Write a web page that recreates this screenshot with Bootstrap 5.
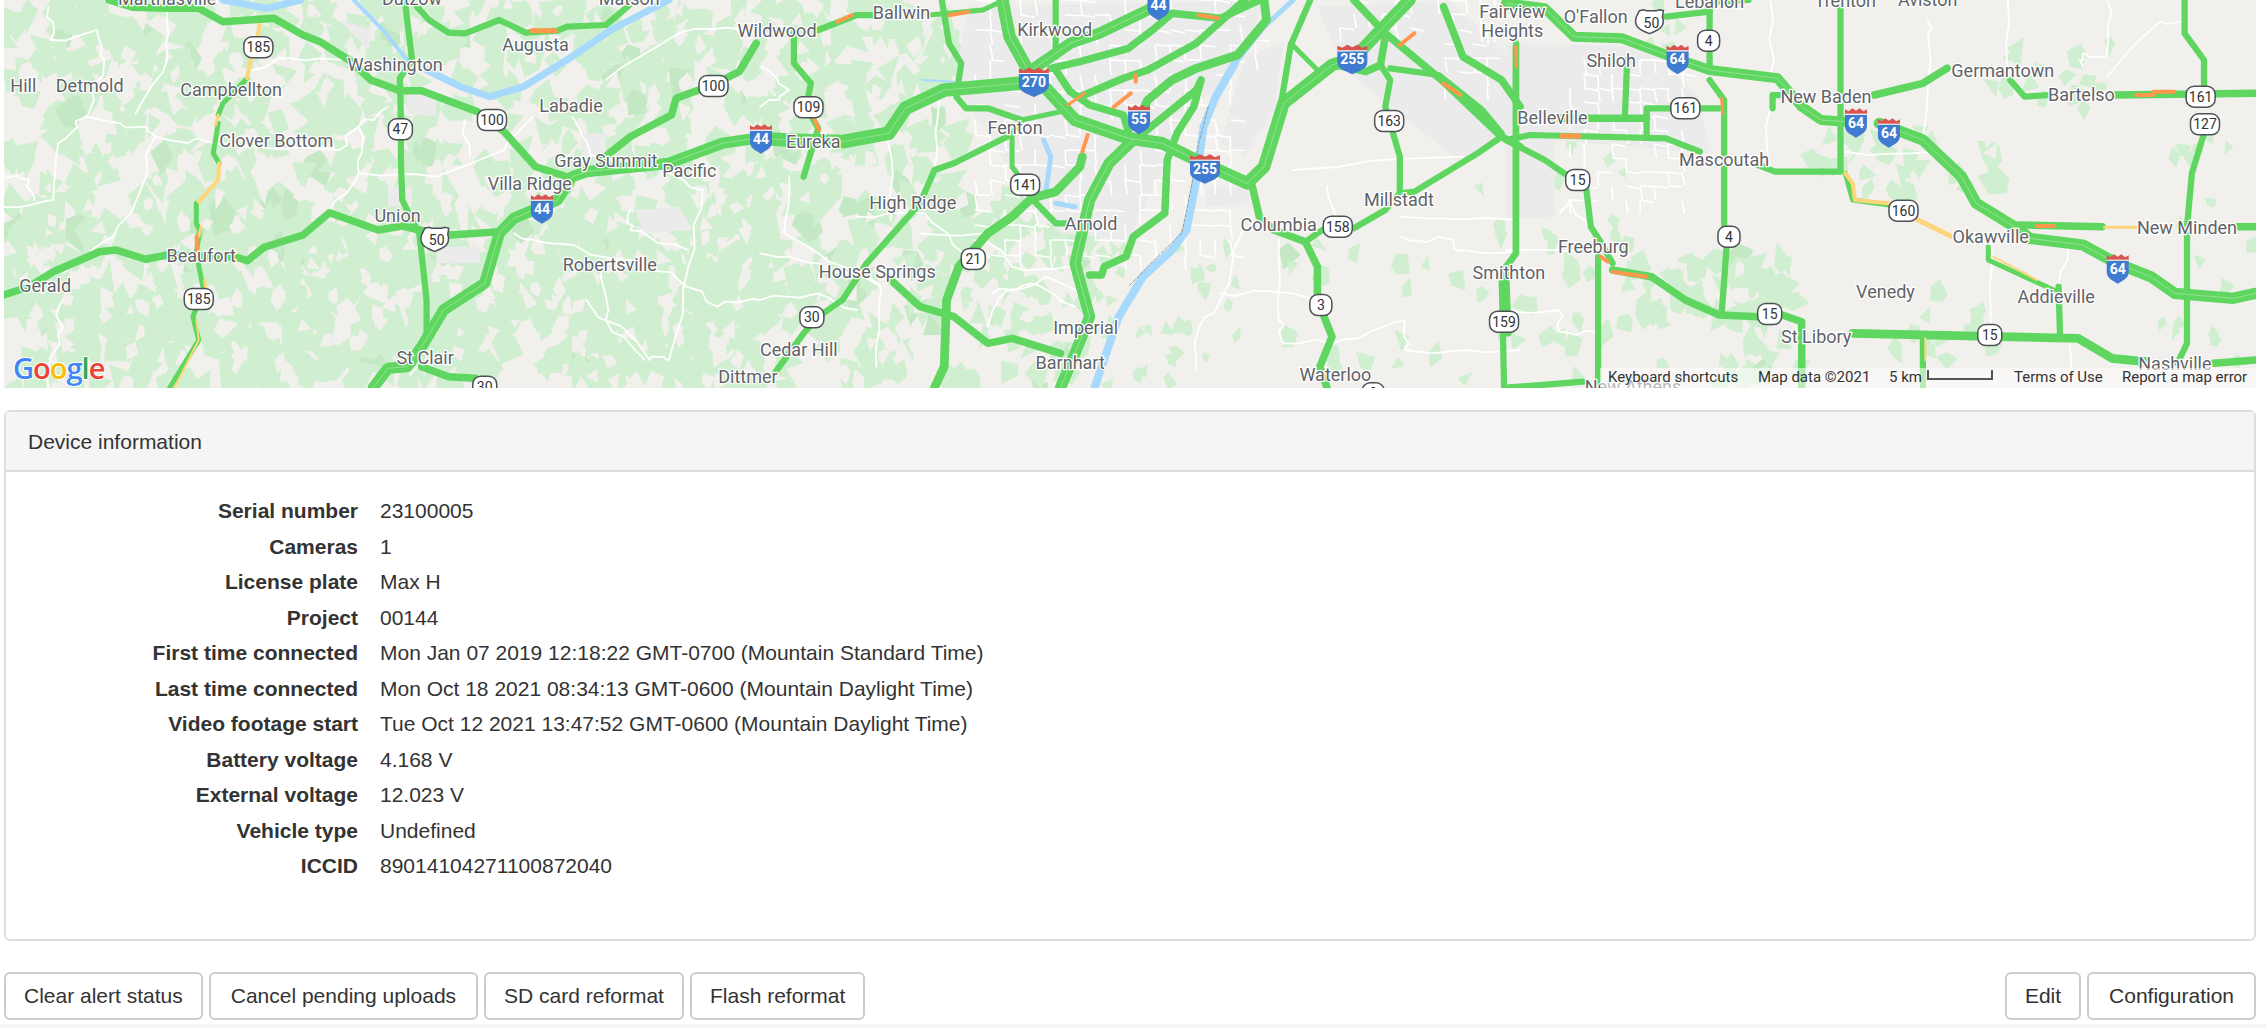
<!DOCTYPE html>
<html lang="en">
<head>
  <meta charset="UTF-8" />
  <meta name="viewport" content="width=device-width, initial-scale=1.0" />
  <title>Device information</title>
  <link href="https://cdn.jsdelivr.net/npm/bootstrap@5.3.3/dist/css/bootstrap.min.css" rel="stylesheet">
  <style>
    body { padding: 0 10px 0 4px; font-family: "Liberation Sans", Arial, sans-serif; font-size: 21px; color: #333; background: #fff; overflow: hidden; }
    .map-box { height: 388px; background: #f1f0ec; }
    .map-box svg { display: block; width: 100%; height: 100%; }
    .map-label { font-family: Roboto, sans-serif; font-size: 18px; fill: #5f6368; stroke: #fff; stroke-width: 2.5px; paint-order: stroke; text-anchor: middle; dominant-baseline: central; }
    .map-foot { font-family: Roboto, sans-serif; font-size: 15px; fill: #333; dominant-baseline: central; }
    .shield-num { font-family: Roboto, sans-serif; font-size: 14px; fill: #333; text-anchor: middle; dominant-baseline: central; }
    .shield-int { font-family: Roboto, sans-serif; font-size: 14px; font-weight: 700; fill: #fff; text-anchor: middle; dominant-baseline: central; }
    .logo-text { font-family: "Open Sans", sans-serif; font-size: 29px; font-weight: 600; stroke: #fff; stroke-width: 2px; paint-order: stroke; letter-spacing: -1px; }
    .device-card { margin-top: 22px; border: 2px solid #ddd; border-radius: 6px; --bs-card-inner-border-radius: 4px; }
    .device-head { background: #f5f5f5; border-bottom: 2px solid #ddd; padding: 0 22px; height: 60px; line-height: 60px; }
    .device-body { padding: 21px 0 55px; }
    .info-row { line-height: 35.5px; gap: 22px; }
    .info-label { width: 352px; flex: none; text-align: right; font-weight: 700; }
    .btn-line { margin-top: 31px; }
    .btn-gap { gap: 6px; }
    .btn-plain { font-size: 21px; line-height: 30px; padding: 7px 18px; color: #333; background: #fff; border: 2px solid #ccc; border-radius: 6px; }
    .btn-wide { padding-left: 20px; padding-right: 20px; }
    .page-foot { height: 6px; margin: 4px -10px 0 -4px; background: #f6f6f6; }
  </style>
</head>
<body>

  <!-- Map -->
  <div class="map-box">
    <svg id="map" viewBox="4 0 2252 388" xmlns="http://www.w3.org/2000/svg" aria-label="Traffic map"></svg>
  </div>

  <!-- Device information -->
  <div class="card device-card">
    <div class="device-head">Device information</div>
    <div class="device-body">
      <div class="d-flex info-row"><div class="info-label">Serial number</div><div>23100005</div></div>
      <div class="d-flex info-row"><div class="info-label">Cameras</div><div>1</div></div>
      <div class="d-flex info-row"><div class="info-label">License plate</div><div>Max H</div></div>
      <div class="d-flex info-row"><div class="info-label">Project</div><div>00144</div></div>
      <div class="d-flex info-row"><div class="info-label">First time connected</div><div>Mon Jan 07 2019 12:18:22 GMT-0700 (Mountain Standard Time)</div></div>
      <div class="d-flex info-row"><div class="info-label">Last time connected</div><div>Mon Oct 18 2021 08:34:13 GMT-0600 (Mountain Daylight Time)</div></div>
      <div class="d-flex info-row"><div class="info-label">Video footage start</div><div>Tue Oct 12 2021 13:47:52 GMT-0600 (Mountain Daylight Time)</div></div>
      <div class="d-flex info-row"><div class="info-label">Battery voltage</div><div>4.168 V</div></div>
      <div class="d-flex info-row"><div class="info-label">External voltage</div><div>12.023 V</div></div>
      <div class="d-flex info-row"><div class="info-label">Vehicle type</div><div>Undefined</div></div>
      <div class="d-flex info-row"><div class="info-label">ICCID</div><div>89014104271100872040</div></div>
    </div>
  </div>

  <!-- Actions -->
  <div class="d-flex justify-content-between btn-line">
    <div class="d-flex btn-gap">
      <button type="button" class="btn btn-plain">Clear alert status</button>
      <button type="button" class="btn btn-plain btn-wide">Cancel pending uploads</button>
      <button type="button" class="btn btn-plain">SD card reformat</button>
      <button type="button" class="btn btn-plain">Flash reformat</button>
    </div>
    <div class="d-flex btn-gap">
      <button type="button" class="btn btn-plain">Edit</button>
      <button type="button" class="btn btn-plain btn-wide">Configuration</button>
    </div>
  </div>
  <div class="page-foot"></div>

  <script src="https://cdn.jsdelivr.net/npm/bootstrap@5.3.3/dist/js/bootstrap.bundle.min.js"></script>
  <script>
    // map data is measured in three overlapping tiles of the reference
    const tileX = [0, 760, 1506];
    const sx = (t, x) => tileX[t] + x / 2.063;
    const sy = y => y / 3;
    const GREEN = '#5fd660', ORANGE = '#ff974d', YELLOW = '#fcd679', LAND = '#f1f0ec';

    // t, width, points
    const roads = [
      [0,6,'225,0 275,22 350,25 410,25 460,65 565,55 625,105 660,125 720,180 765,240 825,272 870,272 985,335 1040,395 1105,500 1170,530'],
      [0,5,'835,0 850,180 825,235 827,360 827,480 830,600 850,660 865,700 880,900 880,1000'],
      [0,5,'860,20 885,60 925,98 960,100 1030,60 1085,98 1150,92 1170,80 1250,75 1295,20 1305,0'],
      [0,6,'8,885 60,860 110,815 205,755 240,750 300,778 345,765 485,770 510,782 545,742 625,705 680,638 780,690 830,678 865,690 930,705 1030,695'],
      [0,9,'1560,415 1490,430 1380,490 1210,515 1180,530 1150,600 1060,655 1030,700 1000,850 915,930 870,1040 840,1100 800,1105 770,1163'],
      [0,6,'870,1100 925,1130 980,1135'],
      [0,6,'1560,130 1525,215 1470,255 1395,295 1385,345 1300,410 1240,480'],
      [0,4,'405,610 405,670 412,690 405,760 420,870 398,950 410,1020 350,1163'],
      [0,4,'510,235 460,310 450,345'],
      [0,4,'450,370 440,460 452,490'],
      [1,11,'0,415 55,420 170,425 265,400 300,325 380,270 535,250'],
      [1,10,'500,0 515,110 545,190 565,240 590,265 650,360 760,415 830,430 900,480 1005,550 1040,500 1080,310 1180,195 1225,175 1300,60 1340,0'],
      [1,9,'565,205 640,130 700,100 800,30 820,15'],
      [1,5,'610,0 610,170'],
      [1,6,'600,205 660,185 760,145 810,90 850,40 950,55 1030,0'],
      [1,6,'610,210 640,275 680,315 750,345 765,420'],
      [1,9,'770,420 720,490 680,600 650,790 680,950 650,1060 620,1163'],
      [1,7,'780,360 800,300 850,240 900,205 985,165 1045,60 1040,0'],
      [1,6,'790,400 900,270 910,240 895,320 860,400 840,480 835,640 770,710 755,770 710,800 705,825 680,825'],
      [1,6,'660,290 750,235 800,210 900,130 1000,0'],
      [1,7,'665,470 660,500 610,575 560,595 520,650 470,700 410,800 385,900 380,1100 360,1163'],
      [1,5,'560,595 610,670 630,670'],
      [1,4,'620,335 540,360 520,400 520,500 545,550'],
      [1,5,'510,410 400,490 360,510 330,610 220,790 170,900 120,950 90,1000 30,1120'],
      [1,5,'375,0 390,130 415,190 405,290 425,325 470,325 540,360'],
      [1,5,'120,90 200,45 235,45'],
      [1,4,'350,45 460,30 490,10'],
      [1,5,'70,100 70,190 105,250 95,320 120,385 90,530'],
      [1,6,'270,840 330,920 400,950 470,1030 520,1015 620,1060'],
      [1,6,'1015,555 1030,650 1060,690 1125,725 1150,800 1150,900 1180,1010 1155,1100 1170,1163'],
      [1,5,'1125,725 1160,690'],
      [1,5,'1225,685 1290,630 1320,580 1350,575 1480,460 1530,410'],
      [1,5,'1320,580 1320,470 1290,320 1300,240 1280,195'],
      [1,5,'1135,0 1095,135 1075,310'],
      [1,4,'1095,130 1150,210'],
      [1,6,'1225,0 1290,100 1410,245 1530,410 1568,440'],
      [1,6,'1190,195 1250,215 1280,195 1290,110'],
      [1,5,'1300,205 1400,225 1490,330 1530,400'],
      [1,6,'1410,20 1450,170 1530,240 1568,320'],
      [1,5,'1560,130 1560,760 1530,820 1535,1163'],
      [2,8,'0,10 80,25 140,110 240,115 340,170 420,210 560,235 610,320 650,360 700,365'],
      [2,9,'770,370 860,420 940,530 970,610 1060,690 1080,715 1190,735 1260,790 1330,830 1380,880 1500,895 1547,880'],
      [2,5,'330,50 420,35'],
      [2,5,'420,0 420,200'],
      [2,5,'420,240 450,300 450,680'],
      [2,5,'455,740 445,940'],
      [2,5,'690,20 690,510'],
      [2,5,'520,495 555,515 690,515'],
      [2,6,'760,285 860,250 910,205'],
      [2,5,'1040,240 1070,290 1120,285'],
      [2,6,'1255,285 1547,280'],
      [2,5,'440,325 290,325 290,410'],
      [2,6,'100,355 290,355'],
      [2,5,'245,355 250,180'],
      [2,5,'550,325 550,285 570,285'],
      [2,5,'0,420 50,405 330,415 400,455'],
      [2,5,'0,420 80,480 120,520 165,560 175,680 195,725 220,790'],
      [2,5,'190,770 190,1163'],
      [2,6,'220,810 300,830 370,900 440,945 520,950'],
      [2,6,'570,945 610,965 610,1163'],
      [2,7,'715,1000 1180,1015 1250,1075 1320,1085'],
      [2,6,'1460,1090 1547,1080'],
      [2,5,'1140,860 1143,1005'],
      [2,4,'995,740 995,780 1130,870'],
      [2,5,'1400,0 1400,100 1440,180 1440,270'],
      [2,5,'1440,400 1415,520 1405,680 1405,1030 1385,1090'],
      [2,6,'1050,675 1230,680'],
      [2,6,'1510,680 1547,680'],
      [2,4,'700,520 715,600 790,615'],
      [2,5,'0,1163 160,1145'],
      [2,5,'860,1015 860,1163'],
      [2,5,'20,140 20,760 0,800 5,1000'],
      [2,5,'500,0 420,6'],
    ];
    // t, colour, width, points
    const slow = [
      [0,YELLOW,4,'535,75 530,130 515,190 510,235'],
      [0,YELLOW,3,'450,345 445,375'],
      [0,YELLOW,4,'452,490 450,540 410,605'],
      [0,YELLOW,3,'415,680 410,710'],
      [0,YELLOW,3,'422,840 425,870'],
      [0,YELLOW,2,'405,960 410,1020 360,1163'],
      [0,ORANGE,5,'1097,92 1145,92'],
      [0,ORANGE,4,'406,710 406,750'],
      [1,ORANGE,4,'905,45 945,55'],
      [1,ORANGE,4,'390,46 430,35'],
      [1,ORANGE,4,'160,65 190,45'],
      [1,ORANGE,4,'110,350 122,390'],
      [1,ORANGE,4,'775,225 775,245'],
      [1,ORANGE,4,'765,280 730,320'],
      [1,ORANGE,4,'676,405 665,455'],
      [1,ORANGE,3,'635,315 670,280'],
      [1,ORANGE,4,'1320,135 1350,100'],
      [1,ORANGE,4,'1410,250 1445,285'],
      [1,ORANGE,3,'1560,140 1560,200'],
      [2,YELLOW,4,'700,520 715,550 720,600 790,610'],
      [2,YELLOW,5,'850,660 920,710'],
      [2,YELLOW,2,'1005,770 1095,840'],
      [2,YELLOW,3,'1235,682 1300,682'],
      [2,YELLOW,2,'865,1015 865,1080'],
      [2,ORANGE,4,'1095,678 1130,678'],
      [2,ORANGE,5,'115,408 150,408'],
      [2,ORANGE,3,'445,295 447,340'],
      [2,ORANGE,4,'1300,285 1335,285'],
      [2,ORANGE,4,'1335,275 1378,275'],
      [2,ORANGE,4,'195,770 210,785'],
      [2,ORANGE,4,'220,815 290,830'],
      [2,ORANGE,3,'20,140 22,200'],
    ];
    // river width, points
    const water = [
      [0,7,'460,0 550,25 620,0'],
      [0,4,'730,0 790,90 840,180'],
      [0,7,'880,210 950,260 1010,290 1080,260 1180,170 1260,90 1380,0'],
      [1,5,'1100,0 1040,80 980,190'],
      [1,8,'980,190 940,290 915,380 900,540 880,690 850,750 790,830 740,950 690,1163'],
      [1,2,'335,240 400,245'],
      [1,5,'585,420 600,470 590,570'],
      [1,5,'610,610 650,620'],
    ];
    // minor white roads
    const minor = [
      [0,'100,20 105,120 200,90 215,180 180,350 300,380 320,410 440,430'],
      [0,'320,410 270,640 220,720 130,820'],
      [0,'180,350 120,430 110,600 0,620'],
      [0,'520,210 600,175 720,180'],
      [0,'345,30 345,180 280,340'],
      [0,'440,430 700,450 740,380 800,320'],
      [0,'740,380 740,520 680,630'],
      [0,'740,520 900,530 1040,450 1100,350'],
      [0,'960,360 970,470'],
      [0,'1060,700 1140,730 1300,780 1400,840 1480,920 1568,900'],
      [0,'1180,350 1200,400 1230,470'],
      [0,'1380,520 1450,570 1420,800 1380,1080 1340,1080 1210,900'],
      [0,'1250,240 1400,100 1540,90'],
      [0,'130,900 120,1000 100,1163'],
      [0,'1300,630 1300,690 1420,750'],
      [0,'1240,800 1250,960 1330,1080'],
      [0,'0,520 60,540 70,600'],
      [1,'0,320 60,270 0,200'],
      [1,'60,530 50,700 250,860 240,1100'],
      [1,'250,860 120,790 0,760'],
      [1,'330,700 460,700 520,800 640,800'],
      [1,'200,650 340,640 420,760'],
      [1,'480,880 560,850 650,920'],
      [1,'260,400 270,660'],
      [1,'370,300 360,500'],
      [1,'0,900 120,880 200,930'],
      [1,'1000,680 950,900 900,1010 900,1110'],
      [1,'1070,720 1070,960 1080,1030 1200,1020 1330,960 1330,1050 1568,1050'],
      [1,'950,880 1100,880 1140,900'],
      [1,'1320,650 1568,660'],
      [1,'1320,710 1430,720 1450,750 1568,750'],
      [1,'1170,560 1200,680'],
      [1,'1100,510 1450,470'],
      [1,'680,900 590,830 490,900 470,980'],
      [2,'0,750 180,750'],
      [2,'0,930 110,930 110,995 190,995'],
      [2,'545,0 545,230'],
      [2,'545,330 545,500'],
      [2,'870,60 870,100 860,420'],
      [2,'700,455 880,455'],
      [2,'1035,0 1035,240'],
      [2,'1240,230 1350,65 1395,65'],
      [2,'1190,200 1190,160 1240,160 1240,0'],
      [2,'1000,720 1000,1000'],
      [2,'1160,740 1140,860'],
      [2,'1165,1020 1165,1110'],
      [2,'110,640 130,600 170,680'],
    ];
    const grey = [
      [1,'430,20 1040,0 1000,170 900,320 800,600 760,720 620,700 560,620 470,400 400,250'],
      [1,'1150,20 1420,0 1568,200 1568,400 1440,480 1200,200'],
      [1,'920,560 1010,560 1010,610 920,620'],
      [1,'1000,170 1080,130 1060,330 1000,470 950,430'],
      [2,'0,130 300,140 400,300 420,460 100,420 100,650 0,660'],
      [0,'1200,400 1250,400 1250,470 1200,470'],
      [0,'1310,630 1400,620 1430,690 1330,700'],
      [0,'800,560 850,560 850,620 800,620'],
      [0,'840,270 900,290 900,350 840,340'],
      [0,'700,60 770,90 760,150'],
      [0,'900,740 990,740 990,790 900,790'],
    ];

    // small seeded generator so the forest texture does not change between runs
    let seed = 20211018;
    function rnd() {
      seed = (seed * 1664525 + 1013904223) % 4294967296;
      return seed / 4294967296;
    }
    function patch(cx, cy, size) {
      const n = 3 + Math.floor(rnd() * 3);
      const start = rnd() * 6.28;
      let pts = [];
      for (let i = 0; i < n; i++) {
        const a = start + (i / n) * 6.28 + rnd() * 0.5;
        const r = size * (0.45 + rnd() * 0.75);
        pts.push((cx + Math.cos(a) * r * 0.8).toFixed(1) + ',' + (cy + Math.sin(a) * r).toFixed(1));
      }
      return pts.join(' ');
    }
    // x0, y0, x1, y1, green patches, size, beige holes
    const forest = [
      [4,0,760,190,420,19,90],
      [4,190,760,388,560,22,170],
      [760,0,960,388,230,20,60],
      [960,200,1090,388,70,16,15],
      [1090,240,1240,388,30,10,0],
      [1280,240,1680,388,40,13,0],
      [1460,130,1640,240,12,10,0],
      [1640,250,1800,320,42,18,6],
      [1700,340,1800,388,14,16,0],
      [1810,130,2000,190,26,16,4],
      [1990,40,2120,110,16,13,2],
      [2160,130,2256,380,18,10,0],
      [1860,290,2000,360,14,12,0],
      [1650,0,1680,50,6,10,0],
    ];

    function fmt(t, pts) {
      return pts.split(' ').map(p => {
        const [x, y] = p.split(',');
        return sx(t, +x).toFixed(1) + ',' + sy(+y).toFixed(1);
      }).join(' ');
    }
    function line(t, width, colour, pts, extra) {
      return `<polyline points="${fmt(t, pts)}" fill="none" stroke="${colour}" stroke-width="${width}" stroke-linejoin="round" stroke-linecap="round" ${extra || ''}/>`;
    }
    // break a straight stretch into short crooked bits, small roads are not ruled lines
    function wiggle(pts) {
      const p = pts.split(' ').map(s => s.split(',').map(Number));
      let res = [p[0].join(',')];
      for (let i = 1; i < p.length; i++) {
        for (let k = 1; k < 4; k++) {
          const x = p[i - 1][0] + (p[i][0] - p[i - 1][0]) * k / 4 + (rnd() - 0.5) * 18;
          const y = p[i - 1][1] + (p[i][1] - p[i - 1][1]) * k / 4 + (rnd() - 0.5) * 22;
          res.push(x.toFixed(0) + ',' + y.toFixed(0));
        }
        res.push(p[i].join(','));
      }
      return res.join(' ');
    }

    let out = `<rect x="4" y="0" width="2252" height="388" fill="${LAND}"/>`;
    forest.forEach(f => {
      for (let i = 0; i < f[4]; i++) {
        const x = f[0] + rnd() * (f[2] - f[0]);
        const y = f[1] + rnd() * (f[3] - f[1]);
        out += `<polygon points="${patch(x, y, f[5])}" fill="${rnd() < 0.04 ? '#c3e8c3' : '#d0eed0'}"/>`;
      }
      for (let i = 0; i < f[6]; i++) {
        const x = f[0] + rnd() * (f[2] - f[0]);
        const y = f[1] + rnd() * (f[3] - f[1]);
        out += `<polygon points="${patch(x, y, 11)}" fill="${LAND}"/>`;
      }
    });
    grey.forEach(g => { out += `<polygon points="${fmt(g[0], g[1])}" fill="#ebebeb"/>`; });
    // suburb street grids
    [[975,0,1240,270,15],[1240,10,1270,60,15],[1570,60,1690,210,14],[1340,0,1500,40,14],[1445,30,1500,90,14]].forEach(b => {
      for (let x = b[0]; x < b[2]; x += b[4]) {
        for (let y = b[1]; y < b[3]; y += b[4]) {
          if (rnd() < 0.45) {
            out += `<line x1="${x}" y1="${y}" x2="${x + b[4]}" y2="${y + rnd() * 3}" stroke="#fff" stroke-width="1.6"/>`;
          }
          if (rnd() < 0.45) {
            out += `<line x1="${x}" y1="${y}" x2="${x + rnd() * 3}" y2="${y + b[4]}" stroke="#fff" stroke-width="1.6"/>`;
          }
        }
      }
    });
    minor.forEach(m => { out += line(m[0], 1.8, '#fff', wiggle(m[1])); });
    water.forEach(w => { out += line(w[0], w[1], '#a6d9fc', w[2]); });
    out += line(1, 1, '#9a9a9a', '925,320 905,430 890,560 870,700 820,770 760,860', 'stroke-dasharray="3 2"');
    roads.forEach(r => { out += line(r[0], r[1] * 1.25, GREEN, r[2]); });
    // thick roads are two carriageways, a faint seam runs down the middle
    roads.filter(r => r[1] >= 8).forEach(r => { out += line(r[0], 0.8, '#9be69b', r[2]); });
    slow.forEach(s => { out += line(s[0], s[2], s[1], s[3]); });

    // state route markers
    const state = [
      [0,533,142,'185'],[0,1015,360,'100'],[0,826,388,'47'],[0,1472,258,'100'],[0,410,897,'185'],[0,1000,1160,'30'],
      [1,100,322,'109'],[1,547,554,'141'],[1,440,777,'21'],[1,107,952,'30'],[1,1157,915,'3'],[1,1192,680,'158'],[1,1298,363,'163'],[1,1535,965,'159'],[1,1265,1180,'3'],
      [2,418,122,'4'],[2,370,325,'161'],[2,148,540,'15'],[2,460,710,'4'],[2,544,942,'15'],[2,998,1005,'15'],[2,820,632,'160'],[2,1433,290,'161'],[2,1442,373,'127'],
    ];
    state.forEach(s => {
      const x = sx(s[0], s[1]), y = sy(s[2]);
      const w = s[3].length === 3 ? 29 : s[3].length === 2 ? 24 : 22;
      out += `<rect x="${x - w / 2}" y="${y - 10.5}" width="${w}" height="21" rx="8" fill="#fff" stroke="#4d5156" stroke-width="1.5"/>`;
      out += `<text class="shield-num" x="${x}" y="${y}">${s[3]}</text>`;
    });
    // US route markers
    [[0,901,718,'50'],[2,300,65,'50']].forEach(s => {
      const x = sx(s[0], s[1]), y = sy(s[2]);
      out += `<path d="M${x - 12} ${y - 11} l4 -1 l3 1 h10 l3 -1 l4 1 l-1 6 c3 9 -2 13 -13 17 c-11 -4 -16 -8 -13 -17 z" fill="#fff" stroke="#4d5156" stroke-width="1.5"/>`;
      out += `<text class="shield-num" x="${x}" y="${y + 1}">${s[3]}</text>`;
    });
    // interstate markers
    const inter = [
      [0,1118,620,'44'],[1,565,240,'270'],[1,782,352,'55'],[1,918,500,'255'],[1,1222,172,'255'],[1,822,10,'44'],[1,2,410,'44'],
      [2,354,172,'64'],[2,722,362,'64'],[2,790,392,'64'],[2,1262,800,'64'],
    ];
    inter.forEach(s => {
      const x = sx(s[0], s[1]), y = sy(s[2]);
      const h = s[3].length === 3 ? 15 : 11;
      out += `<path d="M${x - h} ${y - 6} v11 c0 7 ${h * 0.6} 9 ${h} 12 c${h * 0.4} -3 ${h} -5 ${h} -12 v-11 z" fill="#3f7bd0"/>`;
      out += `<path d="M${x - h} ${y - 6.5} v-5 l${h / 3} 2 l${h / 3} -3 l${h / 3} 2.5 l${h / 3} -2.5 l${h / 3} 3 l${h / 3} -2 v5 z" fill="#d9534f"/>`;
      out += `<path d="M${x - h} ${y - 6.5} h${h * 2}" stroke="#fff" stroke-width="1"/>`;
      out += `<text class="shield-int" x="${x}" y="${y + 2}">${s[3]}</text>`;
    });

    const labels = [
      [0,815,193,'Washington'],[0,1105,133,'Augusta'],[0,185,256,'Detmold'],[0,48,256,'Hill'],[0,477,268,'Campbellton'],[0,1178,316,'Labadie'],
      [0,570,420,'Clover Bottom'],[0,1250,482,'Gray Summit'],[0,1422,510,'Pacific'],[0,1093,551,'Villa Ridge'],[0,820,645,'Union'],[0,415,767,'Beaufort'],
      [0,1258,792,'Robertsville'],[0,93,855,'Gerald'],[0,877,1073,'St Clair'],[0,850,-5,'Dutzow'],[0,345,-5,'Marthasville'],[0,1298,-5,'Matson'],
      [1,35,90,'Wildwood'],[1,292,38,'Ballwin'],[1,608,88,'Kirkwood'],[1,1552,35,'Fairview'],[1,1552,90,'Heights'],
      [1,1635,352,'Belleville'],[1,526,382,'Fenton'],[1,110,425,'Eureka'],[1,315,607,'High Ridge'],[1,683,670,'Arnold'],[1,1070,672,'Columbia'],[1,1318,598,'Millstadt'],
      [1,242,815,'House Springs'],[1,1545,818,'Smithton'],[1,672,982,'Imperial'],[1,80,1048,'Cedar Hill'],[1,640,1087,'Barnhart'],[1,1187,1122,'Waterloo'],[1,-25,1130,'Dittmer'],
      [2,185,48,"O'Fallon"],[2,420,5,'Lebanon'],[2,700,0,'Trenton'],[2,870,-3,'Aviston'],[2,217,180,'Shiloh'],[2,1025,212,'Germantown'],[2,660,290,'New Baden'],[2,1187,284,'Bartelso'],
      [2,450,477,'Mascoutah'],[2,1405,682,'New Minden'],[2,1000,710,'Okawville'],[2,180,740,'Freeburg'],[2,783,875,'Venedy'],[2,1135,890,'Addieville'],[2,640,1010,'St Libory'],[2,1380,1090,'Nashville'],[2,262,1160,'New Athens'],
    ];
    labels.forEach(l => { out += `<text class="map-label" x="${sx(l[0], l[1]).toFixed(1)}" y="${sy(l[2]).toFixed(1)}">${l[3]}</text>`; });

    // Google logo
    out += '<text class="logo-text" x="13" y="379"><tspan fill="#4285f4">G</tspan><tspan fill="#ea4335">o</tspan><tspan fill="#fbbc05">o</tspan><tspan fill="#4285f4">g</tspan><tspan fill="#34a853">l</tspan><tspan fill="#ea4335">e</tspan></text>';

    // attribution strip
    out += '<rect x="1600" y="368" width="656" height="20" fill="#fff" fill-opacity="0.55"/>';
    out += '<text class="map-foot" x="1608" y="377">Keyboard shortcuts</text>';
    out += '<text class="map-foot" x="1758" y="377">Map data ©2021</text>';
    out += '<text class="map-foot" x="1889" y="377">5 km</text>';
    out += '<path d="M1928 370 v9 h64 v-9" fill="none" stroke="#555" stroke-width="2"/>';
    out += '<text class="map-foot" x="2014" y="377">Terms of Use</text>';
    out += '<text class="map-foot" x="2122" y="377">Report a map error</text>';

    document.getElementById('map').innerHTML = out;
  </script>
</body>
</html>
